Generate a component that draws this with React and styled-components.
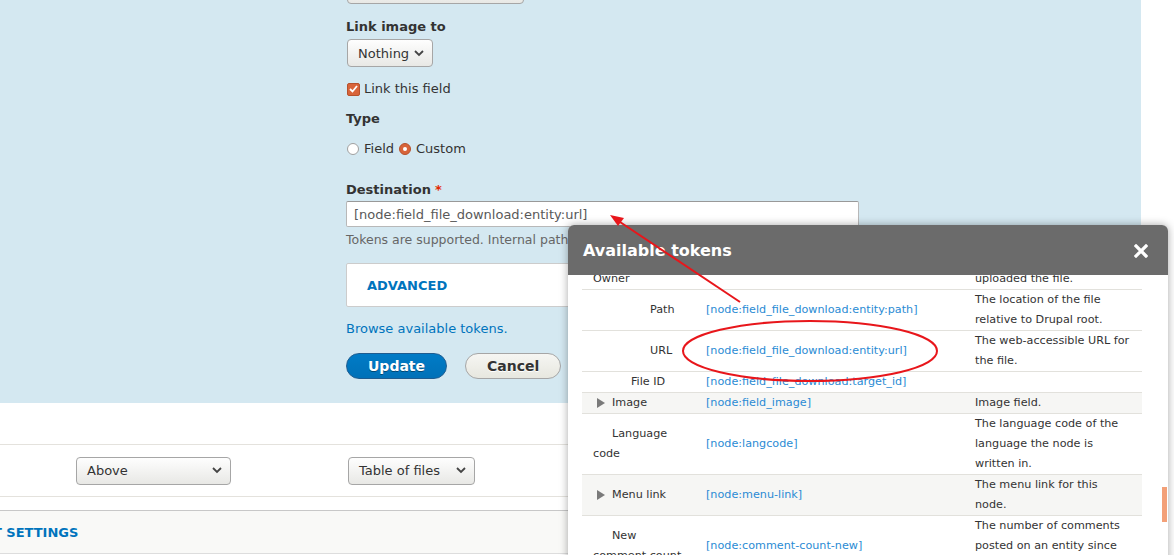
import React from "react";
import styled, { createGlobalStyle } from "styled-components";

const GlobalStyle = createGlobalStyle`
  html, body { margin: 0; padding: 0; background: #fff; }
  body { font-family: "DejaVu Sans", "Noto Sans", sans-serif; overflow: hidden; }
  * { box-sizing: border-box; }
`;

const Page = styled.div`
  position: relative;
  width: 1174px;
  height: 555px;
  overflow: hidden;
  background: #fff;
  color: #333;
  font-family: "DejaVu Sans", sans-serif;
  font-size: 13px;
`;

const Main = styled.div`
  width: 1141px;
`;

const BluePanel = styled.section`
  height: 403px;
  background: #d4e8f1;
  padding-left: 346px;
  display: flex;
  flex-direction: column;
  align-items: flex-start;
`;

const SelectBox = styled.div`
  display: inline-flex;
  align-items: center;
  justify-content: space-between;
  width: ${(p) => p.$width}px;
  height: ${(p) => p.$height || 28}px;
  margin-top: ${(p) => p.$mt || 0}px;
  margin-left: 1px;
  padding: 0 8px 0 10px;
  border: 1px solid #a6a6a6;
  border-radius: 4px;
  background: linear-gradient(#fefefe, #e8e8e5);
  color: #333;
  font-size: 13px;
  line-height: 1;
  white-space: nowrap;
`;

const FieldLabel = styled.div`
  font-weight: bold;
  font-size: 13px;
  line-height: 18px;
  color: #333;
  margin-top: ${(p) => p.$mt}px;
`;

const Required = styled.span`
  color: #e32700;
  margin-left: 4px;
`;

const OptionRow = styled.div`
  display: flex;
  align-items: center;
  height: ${(p) => p.$h}px;
  margin-top: ${(p) => p.$mt}px;
  line-height: 18px;
  color: #333;
`;

const CheckBox = styled.span`
  width: 13px;
  height: 13px;
  margin-left: 1px;
  margin-right: 4px;
  border-radius: 2px;
  background: #d8643a;
  border: 1px solid #b6512c;
  display: inline-flex;
  align-items: center;
  justify-content: center;
`;

const Radio = styled.span`
  width: 12px;
  height: 12px;
  margin-left: ${(p) => p.$ml || 0}px;
  margin-right: 5px;
  border-radius: 50%;
  display: inline-flex;
  align-items: center;
  justify-content: center;
  background: ${(p) => (p.$checked ? "#d8643a" : "#fff")};
  border: 1px solid ${(p) => (p.$checked ? "#b6512c" : "#a0a0a0")};
  &::after {
    content: "";
    display: ${(p) => (p.$checked ? "block" : "none")};
    width: 4px;
    height: 4px;
    border-radius: 50%;
    background: #fff;
  }
`;

const TextInput = styled.div`
  width: 513px;
  height: 26px;
  margin-top: 2px;
  padding: 0 7px;
  display: flex;
  align-items: center;
  background: #fff;
  border: 1px solid #b8b8b8;
  border-top-color: #999;
  border-radius: 2px;
  color: #595959;
  font-size: 13px;
  white-space: nowrap;
`;

const Description = styled.div`
  margin-top: 4px;
  line-height: 18px;
  font-size: 12.5px;
  color: #666;
  white-space: nowrap;
`;

const Details = styled.div`
  width: 513px;
  height: 44px;
  margin-top: 14px;
  padding-left: 20px;
  display: flex;
  align-items: center;
  background: #fff;
  border: 1px solid #ccc;
  border-radius: 2px;
`;

const SummaryText = styled.span`
  color: #0074bd;
  font-weight: bold;
  font-size: 13px;
  text-transform: uppercase;
  white-space: nowrap;
  margin-left: ${(p) => p.$ml || 0}px;
`;

const Link = styled.a`
  margin-top: 13px;
  line-height: 18px;
  color: #0074bd;
  text-decoration: none;
`;

const ButtonRow = styled.div`
  display: flex;
  gap: 18px;
  margin-top: 15px;
`;

const Button = styled.button`
  height: 26px;
  padding: 0 21px;
  border-radius: 20px;
  font-family: "DejaVu Sans", sans-serif;
  font-size: 14px;
  font-weight: bold;
  line-height: 1;
  color: ${(p) => (p.$primary ? "#fff" : "#333")};
  background: ${(p) =>
    p.$primary
      ? "linear-gradient(#007bc6, #0071b8)"
      : "linear-gradient(#f6f6f3, #e7e7df)"};
  border: 1px solid ${(p) => (p.$primary ? "#1e5c90" : "#a6a6a6")};
  text-shadow: ${(p) => (p.$primary ? "0 1px rgba(0,0,0,0.4)" : "0 1px #fff")};
`;

const Bottom = styled.div`
  padding-top: 41px;
`;

const FieldTableRow = styled.div`
  height: 53px;
  border-top: 1px solid #e4e2dd;
  border-bottom: 1px solid #e4e2dd;
  display: flex;
  align-items: center;
  padding-left: 75px;
  gap: 116px;
`;

const SettingsRow = styled.div`
  margin-top: 13px;
  height: 44px;
  border-top: 1px solid #c8c8c8;
  border-bottom: 1px solid #ddd;
  background: #f9f9f7;
  display: flex;
  align-items: center;
  overflow: hidden;
`;

/* Dialog */
const Dialog = styled.div`
  position: absolute;
  left: 568px;
  top: 225px;
  width: 600px;
  height: 400px;
  background: #fff;
  border-radius: 6px 6px 0 0;
  box-shadow: 0 0 8px rgba(0, 0, 0, 0.35);
  overflow: hidden;
`;

const DialogHeader = styled.div`
  height: 50px;
  background: #6b6b6b;
  display: flex;
  align-items: center;
  justify-content: space-between;
  padding: 2px 20px 0 15px;
`;

const DialogTitle = styled.h2`
  margin: 0;
  color: #fff;
  font-size: 16px;
  font-weight: bold;
  line-height: 1;
`;

const DialogBody = styled.div`
  position: relative;
  height: 350px;
  overflow: hidden;
  padding-left: 14px;
`;

const ScrollThumb = styled.div`
  position: absolute;
  right: 1px;
  top: 212px;
  width: 5px;
  height: 35px;
  background: #f3a078;
`;

const TokenTable = styled.table`
  width: 560px;
  margin-top: -26px;
  border-collapse: collapse;
  table-layout: fixed;
  font-size: 11.2px;
  line-height: 20px;
  color: #333;
`;

const Row = styled.tr`
  background: ${(p) => (p.$striped ? "#f6f6f4" : "#fff")};
  border-bottom: 1px solid #e2e1dc;
`;

const Cell = styled.td`
  padding: 0 8px 0 11px;
  vertical-align: middle;
  word-wrap: break-word;
`;

const TokenCell = styled(Cell)`
  color: #2a8bd4;
  white-space: nowrap;
`;

const Indent = styled.span`
  display: inline-flex;
  align-items: center;
  vertical-align: top;
  height: 20px;
  width: ${(p) => p.$w}px;
`;

const Expander = styled.span`
  width: 0;
  height: 0;
  margin-left: 4px;
  border-top: 5px solid transparent;
  border-bottom: 5px solid transparent;
  border-left: 8px solid #7a7a7a;
`;

const Annotation = styled.svg`
  position: absolute;
  left: 0;
  top: 0;
  pointer-events: none;
`;

const Chevron = () => (
  <svg width="10" height="7" viewBox="0 0 10 7">
    <polyline points="1,1 5,5 9,1" fill="none" stroke="#444" strokeWidth="1.8" />
  </svg>
);

const rows = [
  { depth: 3, label: [null, "Owner"], token: "[node:field_file_download:entity:owner]", desc: ["The user who originally", "uploaded the file."] },
  { depth: 3, label: ["Path"], token: "[node:field_file_download:entity:path]", desc: ["The location of the file", "relative to Drupal root."] },
  { depth: 3, label: ["URL"], token: "[node:field_file_download:entity:url]", desc: ["The web-accessible URL for", "the file."] },
  { depth: 2, label: ["File ID"], token: "[node:field_file_download:target_id]", desc: [] },
  { depth: 1, label: ["Image"], token: "[node:field_image]", desc: ["Image field."], expand: true, striped: true },
  { depth: 1, label: ["Language", "code"], token: "[node:langcode]", desc: ["The language code of the", "language the node is", "written in."] },
  { depth: 1, label: ["Menu link"], token: "[node:menu-link]", desc: ["The menu link for this", "node."], expand: true, striped: true },
  { depth: 1, label: ["New", "comment count"], token: "[node:comment-count-new]", desc: ["The number of comments", "posted on an entity since", "the reader last viewed it."] },
];

const Lines = ({ items }) =>
  items.map((t, i) => (
    <React.Fragment key={i}>
      {i > 0 && <br />}
      {t}
    </React.Fragment>
  ));

export default function App() {
  return (
    <>
      <GlobalStyle />
      <Page>
        <Main>
          <BluePanel>
            <SelectBox $width={177} $mt={-24} />
            <FieldLabel $mt={14}>Link image to</FieldLabel>
            <SelectBox $width={86} $mt={3}>
              Nothing <Chevron />
            </SelectBox>
            <OptionRow $h={16} $mt={14}>
              <CheckBox>
                <svg width="9" height="8" viewBox="0 0 9 8">
                  <polyline points="1,4 3.5,6.5 8,1" fill="none" stroke="#fff" strokeWidth="1.8" />
                </svg>
              </CheckBox>
              Link this field
            </OptionRow>
            <FieldLabel $mt={13}>Type</FieldLabel>
            <OptionRow $h={18} $mt={12}>
              <Radio $ml={1} />
              Field
              <Radio $checked $ml={5} />
              Custom
            </OptionRow>
            <FieldLabel $mt={23}>
              Destination<Required>*</Required>
            </FieldLabel>
            <TextInput>[node:field_file_download:entity:url]</TextInput>
            <Description>
              Tokens are supported. Internal paths such as /node/1 are supported.
            </Description>
            <Details>
              <SummaryText>Advanced</SummaryText>
            </Details>
            <Link href="#">Browse available tokens.</Link>
            <ButtonRow>
              <Button $primary>Update</Button>
              <Button>Cancel</Button>
            </ButtonRow>
          </BluePanel>
          <Bottom>
            <FieldTableRow>
              <SelectBox $width={155} $height={28}>
                Above <Chevron />
              </SelectBox>
              <SelectBox $width={127} $height={28}>
                Table of files <Chevron />
              </SelectBox>
            </FieldTableRow>
            <SettingsRow>
              <SummaryText $ml={-59}>Format settings</SummaryText>
            </SettingsRow>
          </Bottom>
        </Main>

        <Dialog>
          <DialogHeader>
            <DialogTitle>Available tokens</DialogTitle>
            <svg width="14" height="14" viewBox="0 0 14 14">
              <path d="M2 2 L12 12 M12 2 L2 12" stroke="#fff" strokeWidth="3.2" strokeLinecap="square" />
            </svg>
          </DialogHeader>
          <DialogBody>
            <TokenTable>
              <colgroup>
                <col style={{ width: 113 }} />
                <col style={{ width: 269 }} />
                <col style={{ width: 178 }} />
              </colgroup>
              <tbody>
                {rows.map((r, i) => (
                  <Row key={i} $striped={r.striped}>
                    <Cell>
                      <Indent $w={r.depth * 19}>{r.expand && <Expander />}</Indent>
                      {r.label[0]}
                      {r.label.slice(1).map((l, j) => (
                        <React.Fragment key={j}>
                          <br />
                          {l}
                        </React.Fragment>
                      ))}
                    </Cell>
                    <TokenCell>{r.token}</TokenCell>
                    <Cell>
                      <Lines items={r.desc} />
                    </Cell>
                  </Row>
                ))}
              </tbody>
            </TokenTable>
            <ScrollThumb />
          </DialogBody>
        </Dialog>

        <Annotation width="1174" height="555" viewBox="0 0 1174 555">
          <ellipse cx="810" cy="351" rx="127" ry="30" fill="none" stroke="#e8161b" strokeWidth="2" />
          <line x1="740" y1="302" x2="620" y2="222" stroke="#e8161b" strokeWidth="2" />
          <polygon points="610,215 624,218 618,226" fill="#e8161b" />
        </Annotation>
      </Page>
    </>
  );
}
